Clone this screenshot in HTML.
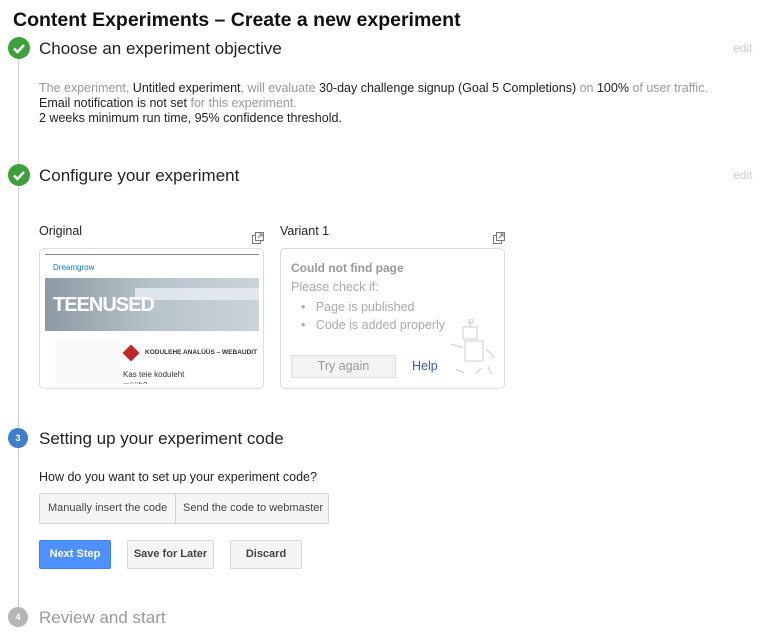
<!DOCTYPE html>
<html><head><style>
*{margin:0;padding:0;box-sizing:border-box}
body{width:768px;height:637px;background:#fff;font-family:"Liberation Sans",Arial,sans-serif;position:relative;overflow:hidden;color:#222}
.a{position:absolute}
.h{font-size:17px;color:#222;white-space:nowrap}
.circ{position:absolute;border-radius:50%;color:#fff;font-size:10px;font-weight:bold;text-align:center}
.g{color:#999}
.edit{font-size:12px;color:#ccc}
.btn{position:absolute;border:1px solid #d6d6d6;background:#f5f5f5;font-size:11px;font-weight:bold;color:#444;text-align:center;line-height:27px;border-radius:2px}
</style></head><body>
<div class="a" style="left:13px;top:9px;font-size:19.5px;font-weight:bold;color:#111">Content Experiments – Create a new experiment</div>
<div class="a" style="left:18px;top:58px;width:1px;height:550px;background:#ccc"></div>

<div class="circ" style="left:8px;top:37px;width:22px;height:22px;background:#3f9f3c"><svg width="22" height="22" viewBox="0 0 22 22"><path d="M6 11.5l3.5 3.5 6.5-7" stroke="#fff" stroke-width="2.4" fill="none"/></svg></div>
<div class="a h" style="left:39px;top:39px">Choose an experiment objective</div>
<div class="a edit" style="left:733px;top:41px">edit</div>
<div class="a" style="left:39px;top:81px;font-size:12.5px;line-height:15px;white-space:nowrap"><span class="g">The experiment, </span>Untitled experiment<span class="g">, will evaluate </span>30-day challenge signup (Goal 5 Completions)<span class="g"> on </span>100%<span class="g"> of user traffic.</span><br>Email notification is not set<span class="g"> for this experiment.</span><br>2 weeks minimum run time, 95% confidence threshold.</div>

<div class="circ" style="left:8px;top:164px;width:22px;height:22px;background:#3f9f3c"><svg width="22" height="22" viewBox="0 0 22 22"><path d="M6 11.5l3.5 3.5 6.5-7" stroke="#fff" stroke-width="2.4" fill="none"/></svg></div>
<div class="a h" style="left:39px;top:166px">Configure your experiment</div>
<div class="a edit" style="left:733px;top:168px">edit</div>

<div class="a" style="left:39px;top:224px;font-size:12.5px">Original</div>
<div class="a" style="left:280px;top:224px;font-size:12.5px">Variant 1</div>
<svg class="a" style="left:252px;top:232px" width="12" height="12" viewBox="0 0 12 12"><rect x="0.5" y="3.5" width="8" height="8" fill="#fff" stroke="#777"/><rect x="3.5" y="0.5" width="8" height="8" fill="#fff" stroke="#777"/><path d="M6 6l4-4M7 2h3v3" stroke="#777" fill="none"/></svg>
<svg class="a" style="left:493px;top:232px" width="12" height="12" viewBox="0 0 12 12"><rect x="0.5" y="3.5" width="8" height="8" fill="#fff" stroke="#777"/><rect x="3.5" y="0.5" width="8" height="8" fill="#fff" stroke="#777"/><path d="M6 6l4-4M7 2h3v3" stroke="#777" fill="none"/></svg>

<div class="a" style="left:39px;top:248px;width:225px;height:141px;border:1px solid #ddd;border-radius:5px;overflow:hidden">
 <div class="a" style="left:5px;top:5px;width:214px;height:130px;background:#fff;overflow:hidden">
  <div class="a" style="left:0;top:0;width:214px;height:1px;background:#888"></div>
  <div class="a" style="left:8px;top:9px;font-size:8px;color:#1a73c8">Dreamgrow</div>
  <div class="a" style="left:0;top:24px;width:214px;height:53px;background:linear-gradient(90deg,#8d9aa3,#b7c3ca 50%,#c9d3da);"></div>
  <div class="a" style="left:90px;top:34px;width:124px;height:12px;background:#e8eef2;opacity:.8"></div>
  <div class="a" style="left:8px;top:40px;font-size:20px;font-weight:bold;color:#fff;letter-spacing:-1px">TEENUSED</div>
  <div class="a" style="left:10px;top:85px;width:65px;height:45px;background:#fafafa"></div>
  <div class="a" style="left:80px;top:93px;width:12px;height:12px;background:#c0282d;transform:rotate(45deg)"></div>
  <div class="a" style="left:100px;top:95px;font-size:6.5px;font-weight:bold;color:#333;white-space:nowrap">KODULEHE ANALÜÜS – WEBAUDIT</div>
  <div class="a" style="left:78px;top:115px;font-size:8px;color:#333;line-height:11px">Kas teie koduleht<br>müüb?</div>
 </div>
</div>

<div class="a" style="left:280px;top:248px;width:225px;height:141px;border:1px solid #ddd;border-radius:5px">
 <div class="a" style="left:10px;top:12px;font-size:12px;font-weight:bold;color:#999">Could not find page</div>
 <div class="a" style="left:10px;top:31px;font-size:12.5px;color:#aaa">Please check if:</div>
 <div class="a" style="left:20px;top:49px;font-size:12.5px;color:#aaa;line-height:18px">•&nbsp;&nbsp; Page is published<br>•&nbsp;&nbsp; Code is added properly</div>
 <div class="a" style="left:10px;top:106px;width:105px;height:23px;border:1px solid #ddd;background:#f3f3f3;font-size:12.5px;color:#999;text-align:center;line-height:21px">Try again</div>
 <div class="a" style="left:131px;top:110px;font-size:12.5px;color:#3a5ea8">Help</div>
 <svg class="a" style="left:165px;top:70px" width="55" height="65" viewBox="0 0 55 65"><g stroke="#ccc" fill="none"><rect x="17" y="8" width="14" height="12"/><rect x="19" y="22" width="18" height="20"/><path d="M24 2v6M5 25l12 4M40 30l8 8M10 50l8 4M30 55l5-6M42 48l4 8"/><circle cx="25" cy="2" r="2"/></g></svg>
</div>

<div class="circ" style="left:8px;top:428px;width:20px;height:20px;background:#3d7fc8;line-height:20px;font-size:9px">3</div>
<div class="a h" style="left:39px;top:429px">Setting up your experiment code</div>
<div class="a" style="left:39px;top:470px;font-size:12.5px">How do you want to set up your experiment code?</div>
<div class="a" style="left:39px;top:493px;width:290px;height:31px;border:1px solid #d3d3d3;background:#f5f5f5;border-radius:2px;font-size:11px;color:#444;line-height:29px">
 <span class="a" style="left:8px">Manually insert the code</span>
 <span class="a" style="left:135px;top:0;width:1px;height:29px;background:#d3d3d3"></span>
 <span class="a" style="left:143px">Send the code to webmaster</span>
</div>
<div class="btn" style="left:39px;top:540px;width:72px;height:29px;background:#4d90fe;border-color:#3d80ee;color:#fff">Next Step</div>
<div class="btn" style="left:127px;top:540px;width:87px;height:29px">Save for Later</div>
<div class="btn" style="left:230px;top:540px;width:72px;height:29px">Discard</div>

<div class="circ" style="left:8px;top:607px;width:20px;height:20px;background:#b5b5b5;line-height:20px;font-size:9px">4</div>
<div class="a h" style="left:39px;top:608px;color:#999">Review and start</div>
</body></html>
